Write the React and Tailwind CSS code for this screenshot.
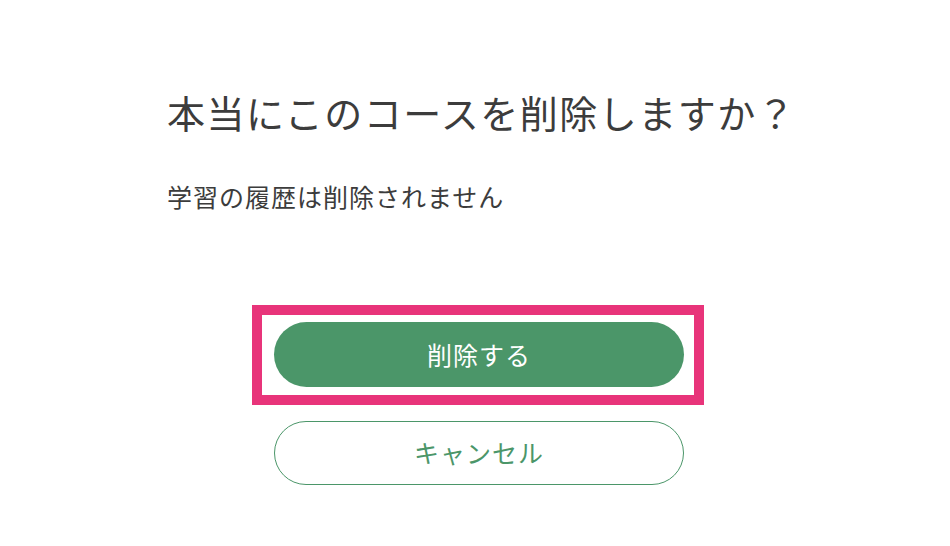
import React from 'react';

const jp = { fontFamily: '"Noto Sans CJK JP", "Noto Sans", sans-serif' };

function ConfirmDelete() {
  return (
    <div className="w-[624px] ml-[167px] pt-[88px] flex flex-col" style={jp}>
      <h1 className="whitespace-nowrap text-[38px] leading-[48px] tracking-[1.5px] text-[#3c3c3c] font-normal">
        本当にこのコースを削除しますか？
      </h1>
      <p className="mt-[44px] whitespace-nowrap text-[25px] leading-[32px] tracking-[1px] text-[#3c3c3c]">
        学習の履歴は削除されません
      </p>

      <div className="mt-[93px] self-start ml-[85px] border-[10px] border-[#e8347a] pt-[7px] pb-[8px] pl-[12px] pr-[10px]">
        <button className="w-[410px] h-[65px] rounded-full bg-[#4b9669] text-white text-[25px] tracking-[1px]">
          削除する
        </button>
      </div>

      <button className="mt-[16px] self-center w-[410px] h-[64px] rounded-full border-[1.5px] border-[#4b9669] bg-white text-[#4b9669] text-[25px] tracking-[1px]">
        キャンセル
      </button>
    </div>
  );
}

export default function App() {
  return (
    <div className="w-[950px] h-[546px] bg-white overflow-hidden">
      <ConfirmDelete />
    </div>
  );
}
